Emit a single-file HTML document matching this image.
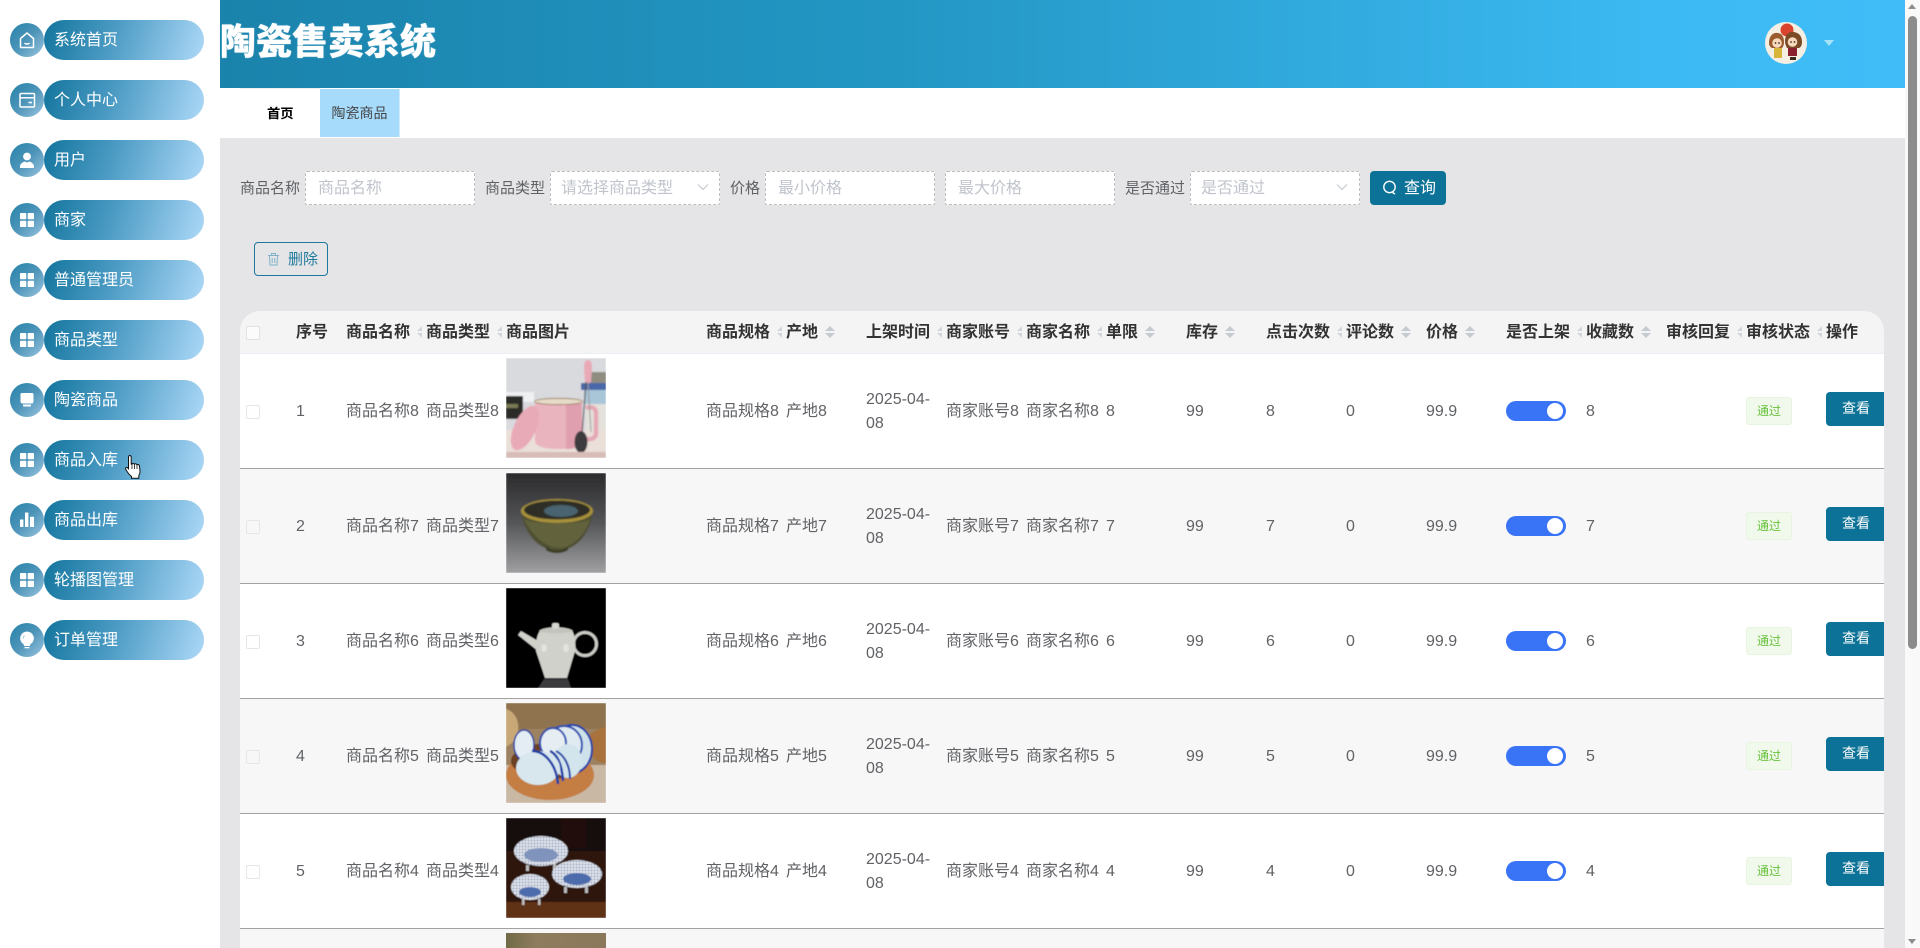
<!DOCTYPE html>
<html lang="zh">
<head>
<meta charset="utf-8">
<title>陶瓷售卖系统</title>
<style>
html,body{margin:0;padding:0;width:1920px;height:948px;overflow:hidden;background:#fff;font-family:"Liberation Sans","Noto Sans CJK SC",sans-serif}
*{box-sizing:border-box}
#w{position:relative;width:1920px;height:948px;overflow:hidden}
.a,.i,.p,.c,.row span,.row div,.row svg{position:absolute}
/* sidebar */
.i{left:10px;width:34px;height:34px;border-radius:50%;background:linear-gradient(135deg,#2581a8 0%,#4d95b9 50%,#9cc5e0 100%)}
.i svg{position:absolute;left:0;top:0}
.p{left:44px;width:160px;height:40px;border-radius:20px;background:linear-gradient(108deg,#13759d 0%,#4a9ac3 42%,#a6d4f4 96%);color:#fff;font-size:16px;line-height:42px;padding-left:10px;letter-spacing:0}
/* search */
.lb{position:absolute;top:177px;font-size:15px;line-height:24px;color:#606266}
.in{position:absolute;top:171px;height:34px;background:#fff;border:1px dashed #bdbdbd;border-radius:2px}
.ph{position:absolute;top:177px;font-size:16px;line-height:24px;color:#c0c4cc}
/* table */
.th{position:absolute;top:321px;font-size:16px;line-height:24px;font-weight:700;color:#333}
.c{top:326px;width:10px;height:13px;overflow:hidden}
.c:before{content:"";position:absolute;left:0;top:0;border:5px solid transparent;border-top:0;border-bottom:5px solid #c6cad1}
.c:after{content:"";position:absolute;left:0;top:7px;border:5px solid transparent;border-bottom:0;border-top:5px solid #c6cad1}
.c.h{width:5px;opacity:.75}
.row{position:absolute;left:0;width:1884px;height:115px;overflow:hidden;clip-path:inset(0 0 0 240px);border-bottom:1px solid #a2a2a2;background:#fff;font-size:16px;line-height:24px;color:#606266}
.row.e{background:#f7f7f7}
.row span{top:46px;white-space:nowrap}
.row .cb{left:246px;top:51px;width:14px;height:14px;background:transparent;border:1px solid #e4e6ea;border-radius:2px}
.row .sw{left:1506px;top:47px;width:60px;height:20px;border-radius:10px;background:#3a74f6}
.row .kn{left:1547px;top:49px;width:16px;height:16px;border-radius:50%;background:#fff}
.row .tag{left:1746px;top:43px;width:46px;height:28px;border:1px solid #e7f4df;border-radius:3px;background:#f0f9eb;color:#67c23a;font-size:12px;line-height:27px;text-align:center}
.row .btn{left:1826px;top:38px;width:64px;height:34px;border-radius:4px;background:#0c7297;color:#fff;font-size:14px;line-height:32px;padding-left:16px}
.row svg.ph2{left:506px;top:4px}
</style>
</head>
<body>
<div id="w">

<!-- sidebar -->
<div class="i" style="top:23px"><svg width="34" height="34" fill="none" stroke="#fff" stroke-width="1.5"><path d="M10.5 15.5 17 10l6.5 5.5V24.500h-13z" stroke-linejoin="round"/><path d="M15 20.500q2 1 4 0" stroke-linecap="round"/></svg></div>
<div class="p" style="top:20px">系统首页</div>
<div class="i" style="top:83px"><svg width="34" height="34" fill="none" stroke="#fff" stroke-width="1.500"><rect x="10" y="10.500" width="14.500" height="13.500" rx="1"/><path d="M10 14.800h14.500"/><path d="M18.500 19.500h3.500"/></svg></div>
<div class="p" style="top:80px">个人中心</div>
<div class="i" style="top:143px"><svg width="34" height="34" fill="#fff"><circle cx="17" cy="13.500" r="3.900"/><path d="M10 25v-1.500c0-2.500 2.500-4.300 4.500-5l2.500 1 2.500-1c2 .7 4.500 2.500 4.500 5V25z"/></svg></div>
<div class="p" style="top:140px">用户</div>
<div class="i" style="top:203px"><svg width="34" height="34" fill="#fff"><rect x="10" y="10" width="6.300" height="6.300" rx=".8"/><rect x="17.700" y="10" width="6.300" height="6.300" rx=".8"/><rect x="10" y="17.700" width="6.300" height="6.300" rx=".8"/><rect x="17.700" y="17.700" width="6.300" height="6.300" rx=".8"/></svg></div>
<div class="p" style="top:200px">商家</div>
<div class="i" style="top:263px"><svg width="34" height="34" fill="#fff"><rect x="10" y="10" width="6.300" height="6.300" rx=".8"/><rect x="17.700" y="10" width="6.300" height="6.300" rx=".8"/><rect x="10" y="17.700" width="6.300" height="6.300" rx=".8"/><rect x="17.700" y="17.700" width="6.300" height="6.300" rx=".8"/></svg></div>
<div class="p" style="top:260px">普通管理员</div>
<div class="i" style="top:323px"><svg width="34" height="34" fill="#fff"><rect x="10" y="10" width="6.300" height="6.300" rx=".8"/><rect x="17.700" y="10" width="6.300" height="6.300" rx=".8"/><rect x="10" y="17.700" width="6.300" height="6.300" rx=".8"/><rect x="17.700" y="17.700" width="6.300" height="6.300" rx=".8"/></svg></div>
<div class="p" style="top:320px">商品类型</div>
<div class="i" style="top:383px"><svg width="34" height="34" fill="#fff"><path d="M12 10h10a1.500 1.500 0 0 1 1.500 1.500V19l-1 1.500h-11l-1-1.500v-7.500A1.500 1.500 0 0 1 12 10z"/><rect x="13" y="21.500" width="8" height="2" rx=".5"/></svg></div>
<div class="p" style="top:380px">陶瓷商品</div>
<div class="i" style="top:443px"><svg width="34" height="34" fill="#fff"><rect x="10" y="10" width="6.300" height="6.300" rx=".8"/><rect x="17.700" y="10" width="6.300" height="6.300" rx=".8"/><rect x="10" y="17.700" width="6.300" height="6.300" rx=".8"/><rect x="17.700" y="17.700" width="6.300" height="6.300" rx=".8"/></svg></div>
<div class="p" style="top:440px">商品入库</div>
<div class="i" style="top:503px"><svg width="34" height="34" fill="#fff"><rect x="10" y="16.500" width="3.400" height="7.500" rx=".5"/><rect x="15" y="9.500" width="3.400" height="14.500" rx=".5"/><rect x="20" y="13.800" width="4" height="10.200" rx=".5"/></svg></div>
<div class="p" style="top:500px">商品出库</div>
<div class="i" style="top:563px"><svg width="34" height="34" fill="#fff"><rect x="10" y="10" width="6.300" height="6.300" rx=".8"/><rect x="17.700" y="10" width="6.300" height="6.300" rx=".8"/><rect x="10" y="17.700" width="6.300" height="6.300" rx=".8"/><rect x="17.700" y="17.700" width="6.300" height="6.300" rx=".8"/></svg></div>
<div class="p" style="top:560px">轮播图管理</div>
<div class="i" style="top:623px"><svg width="34" height="34"><path d="M17 8.500a6.800 6.800 0 0 1 4 12.300c-.8.6-1 1.200-1.200 2.200h-5.600c-.2-1-.4-1.600-1.200-2.200A6.800 6.800 0 0 1 17 8.500z" fill="#fff"/><path d="M14.500 12.500a4 4 0 0 0-1.200 3" stroke="#a9cfe2" stroke-width="1" fill="none"/><rect x="14.500" y="24" width="5" height="1.300" fill="#fff"/></svg></div>
<div class="p" style="top:620px">订单管理</div>

<!-- hand cursor -->
<svg class="a" style="left:124px;top:454px;z-index:5" width="20" height="25" viewBox="0 0 20 25"><path d="M5.500 1.500c1 0 1.700.7 1.700 1.700v7l.6-.1c.3-1 1.900-1 2.300 0l.5.2c.5-.9 1.900-.7 2.200.3l.4.200c.7-.6 2-.2 2.200.9l.6 5.300c.2 2-.4 3.300-1.200 4.500v2.700H7.500v-1.800C5.300 21 3.300 18 1.700 15.300c-.7-1.200.8-2.500 1.900-1.500l.9 1V3.200c0-1 .6-1.700 1-1.700z" fill="#fff" stroke="#111" stroke-width="1"/><path d="M8 10v5M10.500 10.500v4.500M13 11v4" stroke="#111" stroke-width=".8" fill="none"/></svg>

<!-- header -->
<div class="a" style="left:220px;top:0;width:1685px;height:88px;background:linear-gradient(90deg,#1a83ac 0%,#2397c4 40%,#3cb9f2 85%,#40bdf8 100%)"></div>
<div class="a" style="left:220px;top:16px;font-size:36px;line-height:52px;font-weight:900;color:#fff;text-shadow:0 0 1px #fff;white-space:nowrap">陶瓷售卖系统</div>
<!-- avatar -->
<svg class="a" style="left:1765px;top:22px" width="42" height="42" viewBox="0 0 42 42">
<circle cx="21" cy="21" r="21" fill="#f5efe3"/>
<circle cx="22" cy="8" r="6.500" fill="#d9442e"/>
<path d="M4 21c0-7 4-11 9-10 4 .5 6 4 6 9 0 3-1 5-2 6H7c-2-1-3-3-3-5z" fill="#9a5a2e"/>
<circle cx="12" cy="21" r="4.800" fill="#f7d9bd"/>
<circle cx="10.500" cy="21" r=".9" fill="#4a2a1a"/><circle cx="14" cy="21" r=".9" fill="#4a2a1a"/>
<path d="M20 19c0-6 4-10 9-9 5 1 8 4 8 10 0 3-1 5-3 6H22c-1-2-2-4-2-7z" fill="#7b4a26"/>
<circle cx="27.500" cy="20" r="4.800" fill="#f7d9bd"/>
<circle cx="26" cy="20" r=".9" fill="#4a2a1a"/><circle cx="29.500" cy="20" r=".9" fill="#4a2a1a"/>
<rect x="9" y="26" width="8" height="10" fill="#d7b63a"/>
<rect x="23" y="26" width="9" height="8" fill="#8a1f30"/>
<rect x="25" y="35" width="6" height="3" fill="#3a2a22"/>
</svg>
<div class="a" style="left:1824px;top:40px;border:5px solid transparent;border-top:6px solid #a8e2f8;border-bottom:0"></div>

<!-- tabs -->
<div class="a" style="left:220px;top:88px;width:1685px;height:50px;background:#fff"></div>
<div class="a" style="left:240px;top:88px;width:80px;height:1px;background:#eceef0"></div>
<div class="a" style="left:267px;top:102px;font-size:13.300px;line-height:24px;font-weight:700;color:#000">首页</div>
<div class="a" style="left:320px;top:89px;width:80px;height:48px;background:#a6dbfc;color:#444;font-size:14px;line-height:48px;text-align:center;border-right:1px solid #cfeafc;">陶瓷商品</div>

<!-- content bg -->
<div class="a" style="left:220px;top:138px;width:1685px;height:810px;background:#e5e5e7"></div>

<!-- scrollbar -->
<div class="a" style="left:1905px;top:0;width:15px;height:948px;background:#f9f9f9"></div>
<div class="a" style="left:1908px;top:16px;width:9px;height:633px;border-radius:5px;background:#8c8c8c"></div>
<div class="a" style="left:1908px;top:4px;border:4.500px solid transparent;border-top:0;border-bottom:5px solid #8c8c8c"></div>
<div class="a" style="left:1908px;top:939px;border:4.500px solid transparent;border-bottom:0;border-top:5px solid #8c8c8c"></div>

<!-- search -->
<div class="lb" style="left:240px">商品名称</div>
<div class="in" style="left:305px;width:170px"></div>
<div class="ph" style="left:318px">商品名称</div>
<div class="lb" style="left:485px">商品类型</div>
<div class="in" style="left:550px;width:170px"></div>
<div class="ph" style="left:561px">请选择商品类型</div>
<svg class="a" style="left:697px;top:183px" width="12" height="8" fill="none" stroke="#c0c4cc" stroke-width="1"><path d="M1 1.500 6 6.500 11 1.500"/></svg>
<div class="lb" style="left:730px">价格</div>
<div class="in" style="left:765px;width:170px"></div>
<div class="ph" style="left:778px">最小价格</div>
<div class="in" style="left:945px;width:170px"></div>
<div class="ph" style="left:958px">最大价格</div>
<div class="lb" style="left:1125px">是否通过</div>
<div class="in" style="left:1190px;width:170px"></div>
<div class="ph" style="left:1201px">是否通过</div>
<svg class="a" style="left:1336px;top:183px" width="12" height="8" fill="none" stroke="#c0c4cc" stroke-width="1"><path d="M1 1.500 6 6.500 11 1.500"/></svg>
<div class="a" style="left:1370px;top:171px;width:76px;height:34px;border-radius:4px;background:#0c7297;color:#fff;font-size:16px;line-height:35px;padding-left:34px">查询</div>
<svg class="a" style="left:1382px;top:180px" width="16" height="15" fill="none" stroke="#fff" stroke-width="1.400"><circle cx="7.500" cy="7" r="5.700"/><path d="M10.500 12.500 13 14"/></svg>

<!-- delete -->
<div class="a" style="left:254px;top:242px;width:74px;height:34px;border:1px solid #1c789c;border-radius:4px;color:#1f7a9c;font-size:15px;line-height:34px;padding-left:33px">删除</div>
<svg class="a" style="left:267px;top:252px" width="13" height="14" fill="none" stroke="#7fb2c6" stroke-width="1"><path d="M1 3.500h11M4.500 3.500V1.500h4v2M2.500 3.500l.5 9.500h7l.5-9.500M5.200 6v5M7.800 6v5"/></svg>

<!-- table header -->
<div class="a" style="left:240px;top:311px;width:1644px;height:43px;border-radius:20px 20px 0 0;background:#f4f4f5;border-bottom:1px solid #ebeef5"></div>
<div class="a" style="left:246px;top:326px;width:14px;height:14px;border:1px solid #e0e2e6;border-radius:2px;background:#fbfbfb"></div>
<div class="th" style="left:296px">序号</div>
<div class="th" style="left:346px">商品名称</div><div class="a c h" style="left:417px"></div>
<div class="th" style="left:426px">商品类型</div><div class="a c h" style="left:497px"></div>
<div class="th" style="left:506px">商品图片</div>
<div class="th" style="left:706px">商品规格</div><div class="a c h" style="left:777px"></div>
<div class="th" style="left:786px">产地</div><div class="a c" style="left:825px"></div>
<div class="th" style="left:866px">上架时间</div><div class="a c h" style="left:937px"></div>
<div class="th" style="left:946px">商家账号</div><div class="a c h" style="left:1017px"></div>
<div class="th" style="left:1026px">商家名称</div><div class="a c h" style="left:1097px"></div>
<div class="th" style="left:1106px">单限</div><div class="a c" style="left:1145px"></div>
<div class="th" style="left:1186px">库存</div><div class="a c" style="left:1225px"></div>
<div class="th" style="left:1266px">点击次数</div><div class="a c h" style="left:1337px"></div>
<div class="th" style="left:1346px">评论数</div><div class="a c" style="left:1401px"></div>
<div class="th" style="left:1426px">价格</div><div class="a c" style="left:1465px"></div>
<div class="th" style="left:1506px">是否上架</div><div class="a c h" style="left:1577px"></div>
<div class="th" style="left:1586px">收藏数</div><div class="a c" style="left:1641px"></div>
<div class="th" style="left:1666px">审核回复</div><div class="a c h" style="left:1737px"></div>
<div class="th" style="left:1746px">审核状态</div><div class="a c h" style="left:1817px"></div>
<div class="th" style="left:1826px">操作</div>

<!-- row 1 -->
<div class="row" style="top:354px">
<div class="cb"></div><span style="left:296px">1</span><span style="left:346px">商品名称8</span><span style="left:426px">商品类型8</span>
<svg class="ph2" width="100" height="100" viewBox="0 0 100 100"><defs><filter id="b1"><feGaussianBlur stdDeviation=".7"/></filter></defs><g filter="url(#b1)">
<rect width="100" height="100" fill="#d9dade"/>
<rect y="72" width="100" height="28" fill="#eadfd9"/>
<rect x="0" y="34" width="28" height="10" fill="#eef0f2"/>
<rect x="0" y="38" width="17" height="23" fill="#2c2c28"/>
<rect x="0" y="46" width="12" height="4" fill="#7a7a55"/>
<rect x="84" y="14" width="16" height="12" fill="#8f8c80"/>
<rect x="75" y="25" width="25" height="7" fill="#4a68a8"/>
<rect x="78" y="32" width="22" height="14" fill="#a9c6d8"/>
<rect x="80" y="46" width="20" height="26" fill="#e4e1dc"/>
<path d="M80 50c6-2 10 0 10 5v20c0 5-4 7-12 6" fill="none" stroke="#e5a9b6" stroke-width="4.500"/>
<path d="M29 44h47v38c0 6-6 9-23 9s-24-3-24-9z" fill="#eab4bf"/>
<path d="M60 46h16v36c0 6-6 9-16 9z" fill="#e09fae"/>
<ellipse cx="52.500" cy="43.500" rx="24" ry="3.200" fill="#e6dcc8" stroke="#8a6b4a" stroke-width=".8"/>
<ellipse cx="19" cy="70" rx="11" ry="24" transform="rotate(25 19 70)" fill="#e9aab8"/>
<path d="M82 2q-4 0-4 8l1 14q3 3 6 0l1-14q0-8-4-8z" fill="#e9a9b7"/>
<path d="M80 24l-4 52" stroke="#555" stroke-width="1.200"/><path d="M82 24l3 50" stroke="#999" stroke-width="1"/>
<ellipse cx="75" cy="84" rx="6.500" ry="11" fill="#3c3a3e"/>
<rect y="94" width="100" height="6" fill="#d8bcb8"/>
</g></svg>
<span style="left:706px">商品规格8</span><span style="left:786px">产地8</span><span style="left:866px;top:34px">2025-04-<br>08</span><span style="left:946px">商家账号8</span><span style="left:1026px">商家名称8</span><span style="left:1106px">8</span><span style="left:1186px">99</span><span style="left:1266px">8</span><span style="left:1346px">0</span><span style="left:1426px">99.9</span>
<div class="sw"></div><div class="kn"></div><span style="left:1586px">8</span><div class="tag">通过</div><div class="btn">查看</div>
</div>

<!-- row 2 -->
<div class="row e" style="top:469px">
<div class="cb"></div><span style="left:296px">2</span><span style="left:346px">商品名称7</span><span style="left:426px">商品类型7</span>
<svg class="ph2" width="100" height="100" viewBox="0 0 100 100"><defs><linearGradient id="g2" x1="0" y1="0" x2="0" y2="1"><stop offset="0" stop-color="#2a2a2c"/><stop offset=".5" stop-color="#555658"/><stop offset="1" stop-color="#a0a0a2"/></linearGradient><filter id="b2"><feGaussianBlur stdDeviation=".7"/></filter></defs><g filter="url(#b2)">
<rect width="100" height="100" fill="url(#g2)"/>
<path d="M15 38c3 20 14 34 27 38l3 1c4 1 9 1 13 0l3-1c14-5 23-18 26-38z" fill="#4f5030"/>
<path d="M18 46c8 6 60 6 66 0-4 14-14 24-24 28-12 4-30-4-42-28z" fill="#666840" opacity=".8"/>
<path d="M40 73c4 6 18 6 22 0v4c-6 4-16 4-22 0z" fill="#3b3b22"/>
<ellipse cx="51" cy="38" rx="36" ry="12" fill="#a8913a"/>
<ellipse cx="51" cy="37" rx="33" ry="9.500" fill="#2f2e26"/>
<ellipse cx="55" cy="38" rx="17" ry="6" fill="#49636f"/>
</g></svg>
<span style="left:706px">商品规格7</span><span style="left:786px">产地7</span><span style="left:866px;top:34px">2025-04-<br>08</span><span style="left:946px">商家账号7</span><span style="left:1026px">商家名称7</span><span style="left:1106px">7</span><span style="left:1186px">99</span><span style="left:1266px">7</span><span style="left:1346px">0</span><span style="left:1426px">99.9</span>
<div class="sw"></div><div class="kn"></div><span style="left:1586px">7</span><div class="tag">通过</div><div class="btn">查看</div>
</div>

<!-- row 3 -->
<div class="row" style="top:584px">
<div class="cb"></div><span style="left:296px">3</span><span style="left:346px">商品名称6</span><span style="left:426px">商品类型6</span>
<svg class="ph2" width="100" height="100" viewBox="0 0 100 100"><defs><filter id="b3"><feGaussianBlur stdDeviation=".6"/></filter></defs><g filter="url(#b3)">
<rect width="100" height="100" fill="#040405"/>
<path d="M38 91h24l3 9H32z" fill="#3a3a3c"/>
<circle cx="79" cy="56" r="11.500" fill="none" stroke="#c9cbc4" stroke-width="3"/>
<path d="M12 47l3-4 17 10v10z" fill="#d0d2ca"/>
<path d="M34 43c8-5 24-5 32 0 3 3 4 14 3 20L61 90H39L30 63c-1-6 1-17 4-20z" fill="#cfd1ca"/>
<ellipse cx="38" cy="60" rx="3" ry="4" fill="#e2e3dd"/><ellipse cx="60" cy="60" rx="3" ry="4" fill="#e2e3dd"/>
<path d="M33 43c4-5 30-5 34 0-4 3-30 3-34 0z" fill="#c3c5bd"/>
<rect x="46" y="35" width="7" height="6" rx="2" fill="#d4d5ce"/>
</g></svg>
<span style="left:706px">商品规格6</span><span style="left:786px">产地6</span><span style="left:866px;top:34px">2025-04-<br>08</span><span style="left:946px">商家账号6</span><span style="left:1026px">商家名称6</span><span style="left:1106px">6</span><span style="left:1186px">99</span><span style="left:1266px">6</span><span style="left:1346px">0</span><span style="left:1426px">99.9</span>
<div class="sw"></div><div class="kn"></div><span style="left:1586px">6</span><div class="tag">通过</div><div class="btn">查看</div>
</div>

<!-- row 4 -->
<div class="row e" style="top:699px">
<div class="cb"></div><span style="left:296px">4</span><span style="left:346px">商品名称5</span><span style="left:426px">商品类型5</span>
<svg class="ph2" width="100" height="100" viewBox="0 0 100 100"><defs><filter id="b4"><feGaussianBlur stdDeviation=".6"/></filter></defs><g filter="url(#b4)">
<rect width="100" height="100" fill="#9c8260"/>
<rect y="0" width="100" height="26" fill="#8f7350"/>
<rect y="62" width="100" height="38" fill="#c9b8a4"/>
<path d="M0 6c14 4 16 24 6 34L0 44z" fill="#c9a878"/>
<path d="M84 32c6-6 16-8 16-8v36c-8 0-16-6-17-14z" fill="#a9713a"/>
<ellipse cx="44" cy="72" rx="44" ry="25" fill="#c47d42"/>
<ellipse cx="44" cy="58" rx="39" ry="18" fill="#6c4024"/>
<ellipse cx="66" cy="46" rx="20" ry="24" fill="#cfe2ec" stroke="#1e3fa8" stroke-width="2"/>
<ellipse cx="58" cy="42" rx="18" ry="19" fill="#dfeaf1" stroke="#2a4db0" stroke-width="2"/>
<ellipse cx="47" cy="40" rx="13" ry="15" fill="#e6eef3" stroke="#2a4db0" stroke-width="2"/>
<ellipse cx="18" cy="42" rx="10" ry="15" fill="#e3edf3" stroke="#1e3fa8" stroke-width="1.500"/>
<ellipse cx="62" cy="58" rx="14" ry="17" fill="#d2e4ec"/>
<path d="M50 48c8 4 14 14 14 28" fill="none" stroke="#1e3fa8" stroke-width="2"/>
<path d="M44 48c8 4 12 14 13 30" fill="none" stroke="#1e3fa8" stroke-width="2.500"/>
<ellipse cx="32" cy="65" rx="22" ry="17" fill="#d8e7ee"/>
<path d="M26 48c12 0 24 12 26 33" fill="none" stroke="#1e3fa8" stroke-width="2.500"/>
</g></svg>
<span style="left:706px">商品规格5</span><span style="left:786px">产地5</span><span style="left:866px;top:34px">2025-04-<br>08</span><span style="left:946px">商家账号5</span><span style="left:1026px">商家名称5</span><span style="left:1106px">5</span><span style="left:1186px">99</span><span style="left:1266px">5</span><span style="left:1346px">0</span><span style="left:1426px">99.9</span>
<div class="sw"></div><div class="kn"></div><span style="left:1586px">5</span><div class="tag">通过</div><div class="btn">查看</div>
</div>

<!-- row 5 -->
<div class="row" style="top:814px">
<div class="cb"></div><span style="left:296px">5</span><span style="left:346px">商品名称4</span><span style="left:426px">商品类型4</span>
<svg class="ph2" width="100" height="100" viewBox="0 0 100 100"><defs><pattern id="d5" width="3" height="3" patternUnits="userSpaceOnUse"><rect width="3" height="3" fill="#dfe3ea"/><circle cx="1.500" cy="1.500" r=".7" fill="#5a6f9f"/></pattern><filter id="b5"><feGaussianBlur stdDeviation=".5"/></filter></defs><g filter="url(#b5)">
<rect width="100" height="100" fill="#140a0a"/>
<rect x="55" y="0" width="25" height="30" fill="#22100e"/>
<rect y="33" width="100" height="67" fill="#2e170f"/>
<rect y="84" width="100" height="16" fill="#5e3218"/>
<ellipse cx="35" cy="33" rx="27" ry="15" fill="url(#d5)"/>
<ellipse cx="35" cy="37" rx="17" ry="7" fill="#7f93bd"/>
<rect x="20" y="47" width="3" height="6" fill="#bbb"/><rect x="47" y="46" width="3" height="6" fill="#bbb"/>
<ellipse cx="71" cy="56" rx="25" ry="14" fill="url(#d5)"/>
<ellipse cx="71" cy="61" rx="14" ry="6" fill="#4e6cab"/>
<rect x="58" y="69" width="3" height="6" fill="#bbb"/><rect x="79" y="69" width="3" height="6" fill="#bbb"/>
<ellipse cx="24" cy="69" rx="19" ry="13" fill="url(#d5)"/>
<ellipse cx="24" cy="74" rx="11" ry="5" fill="#4e6cab"/>
<rect x="16" y="81" width="2.500" height="6" fill="#bbb"/><rect x="32" y="81" width="2.500" height="6" fill="#bbb"/>
</g></svg>
<span style="left:706px">商品规格4</span><span style="left:786px">产地4</span><span style="left:866px;top:34px">2025-04-<br>08</span><span style="left:946px">商家账号4</span><span style="left:1026px">商家名称4</span><span style="left:1106px">4</span><span style="left:1186px">99</span><span style="left:1266px">4</span><span style="left:1346px">0</span><span style="left:1426px">99.9</span>
<div class="sw"></div><div class="kn"></div><span style="left:1586px">4</span><div class="tag">通过</div><div class="btn">查看</div>
</div>

<!-- row 6 -->
<div class="row e" style="top:929px;height:19px;border-bottom:0">
<svg class="ph2" width="100" height="15" viewBox="0 0 100 15"><defs><linearGradient id="g6" x1="0" y1="0" x2="1" y2="0"><stop offset="0" stop-color="#6f6a45"/><stop offset=".3" stop-color="#8f7c5f"/><stop offset="1" stop-color="#8b775a"/></linearGradient></defs><rect width="100" height="15" fill="url(#g6)"/></svg>
</div>

</div>
</body>
</html>
